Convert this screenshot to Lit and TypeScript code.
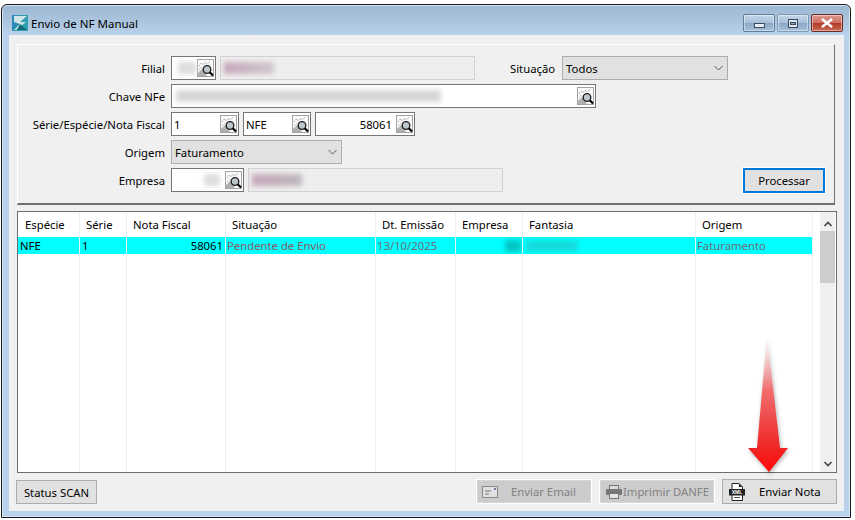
import { LitElement, html, css } from "lit";
import { customElement } from "lit/decorators.js";

const lookup = html`<svg class="lk" viewBox="0 0 17 18" width="17" height="18">
  <rect x=".5" y=".5" width="16" height="17" fill="#fbfbfb" stroke="#a2a2a2"/>
  <path d="M1 17 L1 14 L5 10 L10 17Z" fill="#b0b0b0"/>
  <path d="M2 7 L4 4 L6 6 L8 3 L10 5 L13 2.5" fill="none" stroke="#777" stroke-width=".8" stroke-dasharray="1 1"/>
  <path d="M2 11 L4 8 L6 10" fill="none" stroke="#999" stroke-width=".8" stroke-dasharray="1 1"/>
  <circle cx="10" cy="10.5" r="3.8" fill="#bcc7cc" stroke="#1a1a1a" stroke-width="1.3"/>
  <path d="M12.7 13.2 L16 16.5" stroke="#000" stroke-width="2.1"/>
</svg>`;

const chev = html`<svg class="chev" viewBox="0 0 9 6" width="9" height="6"><path d="M.5 1 L4.5 5 L8.5 1" fill="none" stroke="#555" stroke-width="1"/></svg>`;

const cols = [
  { t: "Espécie", w: 62, c: "NFE", cls: "blk" },
  { t: "Série", w: 47, c: "1", cls: "blk" },
  { t: "Nota Fiscal", w: 99, c: "58061", cls: "blk num" },
  { t: "Situação", w: 150, c: "Pendente de Envio", cls: "red" },
  { t: "Dt. Emissão", w: 80, c: "13/10/2025", cls: "gry" },
  { t: "Empresa", w: 67, c: "", cls: "emp" },
  { t: "Fantasia", w: 173, c: "", cls: "fan" },
  { t: "Origem", w: 117, c: "Faturamento", cls: "gry" },
];

@customElement("app-root")
export class AppRoot extends LitElement {
  static styles = css`
    :host { display: block; width: 855px; height: 520px; box-sizing: border-box; padding: 4px 4px 2px 1px; background: #fff;
      font: 11.3px "Noto Sans", "Open Sans", sans-serif; color: #000; overflow: hidden; position: relative; }
    * { box-sizing: border-box; }
    .win { height: 100%; border: 1px solid #1a1a1a; border-radius: 6px 6px 0 0; display: flex; flex-direction: column;
      background: linear-gradient(180deg, #9db8d3 0, #a9c3dd 14px, #b9d1ea 30px, #b9d1ea 100%); box-shadow: inset 0 0 0 1px #d4e4f3; }
    .title { height: 30px; flex: none; display: flex; align-items: center; padding: 6px 7px 0 10px; gap: 3px; }
    .title .cap { font-size: 11.5px; flex: 1; }
    .logo { flex: none; }
    .ctl { display: flex; gap: 2px; }
    .ctl div { height: 18px; border: 1px solid #5f7c9c; border-radius: 2px; display: flex; align-items: center; justify-content: center;
      background: linear-gradient(180deg, #c4d6e8 0, #a9c1da 48%, #8ba8c7 52%, #a6c0da 100%); box-shadow: inset 0 0 0 1px rgba(255,255,255,.45); }
    .ctl .min { width: 32px; } .ctl .max { width: 32px; border-color: #7d99b6; }
    .ctl .cls { width: 32px; border-color: #6d2a20; background: linear-gradient(180deg, #dd9a8e 0, #ce6f60 48%, #b33a27 52%, #c96a55 100%); }
    .gmin { width: 11px; height: 5px; background: #e8eef5; border: 1px solid #3b4a5c; margin-top: 5px; }
    .gmax { width: 10px; height: 9px; background: #dde6ef; border: 1px solid #3b4a5c; position: relative; }
    .gmax::after { content: ""; position: absolute; left: 1px; top: 2px; width: 6px; height: 3px; background: #8ba8c7; border: 1px solid #3b4a5c; box-sizing: border-box; }
    .client { flex: 1; margin: 0 6px 6px 7px; background: #f0f0f0; padding: 9px 8px 6px; display: flex; flex-direction: column; min-height: 0; }
    .panel { flex: none; height: 161px; margin-right: 1px; border: 1px solid; border-color: #fff #6f6f6f #6f6f6f #fff; border-bottom-width: 2px; padding: 11px 9px 0 0; display: flex; flex-direction: column; gap: 4px; }
    .row { display: flex; height: 24px; align-items: center; gap: 4px; }
    .lb { width: 147px; text-align: right; margin-right: 2px; flex: none; white-space: nowrap; }
    .lb2 { margin-left: 31px; margin-right: 3px; }
    .in { height: 100%; border: 1px solid #767676; background: #fff; display: flex; align-items: center; padding: 0 1px 0 2px; flex: none; }
    .in .v { flex: 1; min-width: 0; } .in.r .v { text-align: right; padding-right: 4px; }
    .lk { flex: none; display: block; }
    .ro { height: 100%; border: 1px solid #d2d2d2; background: #eeeeee; flex: none; display: flex; align-items: center; padding-left: 3px; }
    .sel { height: 100%; border: 1px solid #adadad; background: #e1e1e1; flex: none; display: flex; align-items: center; justify-content: space-between; padding: 0 4px 0 3px; }
    .bl { filter: blur(2.5px); height: 12px; flex: none; }
    .btnP { margin-left: auto; width: 82px; height: 25px; border: 2px solid #0078d7; background: #e1e1e1; display: flex; align-items: center; justify-content: center; box-shadow: 0 0 0 1px #fff; }
    .grid { flex: none; height: 262px; margin-top: 6px; margin-right: -1px; border: 1px solid #6e6e6e; background: #fff; display: flex; }
    .col { flex: none; border-right: 1px solid #efefef; display: flex; flex-direction: column; }
    .hd { height: 25px; padding-left: 6px; display: flex; align-items: center; flex: none; }
    .col:first-child .hd { padding-left: 7px; }
    .cell { height: 17px; flex: none; background: #00ffff; display: flex; align-items: center; padding: 0 1px; white-space: nowrap; overflow: hidden; }
    .cell.num { justify-content: flex-end; padding-right: 2px; }
    .red { color: #8a5a62; padding-left: 1px; }
    .gry { color: #6e6e78; }
    .blk { color: #000; padding-left: 2px; }
    .emp { justify-content: flex-end; }
    .sb { width: 15px; flex: none; margin-left: auto; margin-right: 1px; background: #f0f0f0; display: flex; flex-direction: column; align-items: center; }
    .sb svg { flex: none; }
    .sb .up { margin-top: 6px; height: 12px; }
    .th { width: 100%; height: 52px; background: #cdcdcd; margin-top: 1px; }
    .sb .dn { margin-top: auto; margin-bottom: 4px; }
    .foot { display: flex; margin-top: 6px; gap: 7px; flex: none; height: 25px; margin-right: -1px; margin-left: -1px; }
    .b { height: 25px; border: 1px solid #adadad; background: #e1e1e1; display: flex; align-items: center; flex: none; white-space: nowrap; }
    .b.dis { background: #cccccc; color: #838383; border: 1px solid #fff; outline: 1px solid #d6d6d6; outline-offset: -2px; }
    .scan { width: 81px; justify-content: center; margin-right: auto; height: 24px; margin-top: 1px; }
    .em { width: 116px; } .em svg { margin-left: 5px; } .em span { margin-left: 13px; }
    .im { width: 116px; } .im svg { margin-left: 6px; } .im span { margin-left: 1px; }
    .nt { width: 115px; } .nt svg { margin-left: 6px; } .nt span { margin-left: 14px; }
    .xml { font: bold 5px "Liberation Sans", sans-serif; fill: #fff; }
    .arrow { position: absolute; left: 740px; top: 330px; pointer-events: none; filter: drop-shadow(1px 2px 2px rgba(0,0,0,.3)); }
  `;

  render() {
    return html`
      <div class="win">
        <div class="title">
          <svg class="logo" viewBox="0 0 16 16" width="16" height="16">
            <rect width="16" height="16" fill="#2e9fb0"/>
            <path d="M0 0H7L3 5L8 7L0 16Z" fill="#2c8bb8"/>
            <path d="M2 1H15L8 7L14 7L4 15H2L8 9L2 7Z" fill="#cfe4e6"/>
            <path d="M8 9L15 15H5Z" fill="#0f6a7a"/>
          </svg>
          <span class="cap">Envio de NF Manual</span>
          <div class="ctl">
            <div class="min"><span class="gmin"></span></div>
            <div class="max"><span class="gmax"></span></div>
            <div class="cls">
              <svg viewBox="0 0 14 10" width="14" height="10"><path d="M2 1 L12 9 M12 1 L2 9" stroke="#f4f4f4" stroke-width="2.6"/><path d="M2 1 L12 9 M12 1 L2 9" stroke="#fff" stroke-width="1.4"/></svg>
            </div>
          </div>
        </div>
        <div class="client">
          <div class="panel">
            <div class="row">
              <span class="lb">Filial</span>
              <div class="in" style="width:45px"><span class="v"><div class="bl" style="width:18px;margin-left:4px;background:#ddd"></div></span>${lookup}</div>
              <div class="ro" style="width:255px"><div class="bl" style="width:50px;background:linear-gradient(90deg,#c8a8bc,#cfc8cf)"></div></div>
              <span class="lb2">Situação</span>
              <div class="sel" style="width:166px"><span>Todos</span>${chev}</div>
            </div>
            <div class="row">
              <span class="lb">Chave NFe</span>
              <div class="in" style="width:425px"><span class="v"><div class="bl" style="width:265px;margin-left:2px;background:#d6d6d6"></div></span>${lookup}</div>
            </div>
            <div class="row">
              <span class="lb">Série/Espécie/Nota Fiscal</span>
              <div class="in" style="width:68px"><span class="v">1</span>${lookup}</div>
              <div class="in" style="width:68px"><span class="v">NFE</span>${lookup}</div>
              <div class="in r" style="width:100px"><span class="v">58061</span>${lookup}</div>
            </div>
            <div class="row">
              <span class="lb">Origem</span>
              <div class="sel" style="width:171px"><span>Faturamento</span>${chev}</div>
            </div>
            <div class="row">
              <span class="lb">Empresa</span>
              <div class="in r" style="width:73px"><span class="v"><div class="bl" style="width:16px;margin-left:30px;background:#ddd"></div></span>${lookup}</div>
              <div class="ro" style="width:255px"><div class="bl" style="width:50px;background:linear-gradient(90deg,#c8a8bc,#bdb8bd)"></div></div>
              <div class="btnP">Processar</div>
            </div>
          </div>
          <div class="grid">
            ${cols.map(c => html`
              <div class="col" style="width:${c.w}px">
                <div class="hd">${c.t}</div>
                <div class="cell ${c.cls}">${c.c}
                  ${c.cls === "emp" ? html`<div class="bl" style="width:16px;background:#00c4c4"></div>` : ""}
                  ${c.cls === "fan" ? html`<div class="bl" style="width:52px;background:#14dcdc;margin-left:2px"></div>` : ""}
                </div>
              </div>`)}
            <div class="sb">
              <svg class="up" viewBox="0 0 10 8" width="10" height="8"><path d="M1.5 6 L5 2.5 L8.5 6" fill="none" stroke="#444" stroke-width="1.6"/></svg>
              <div class="th"></div>
              <svg class="dn" viewBox="0 0 10 8" width="10" height="8"><path d="M1.5 2 L5 5.5 L8.5 2" fill="none" stroke="#444" stroke-width="1.6"/></svg>
            </div>
          </div>
          <div class="foot">
            <div class="b scan">Status SCAN</div>
            <div class="b dis em">
              <svg viewBox="0 0 16 12" width="16" height="12"><rect x=".5" y=".5" width="15" height="11" fill="#e0e0e0" stroke="#8a8a8a"/><path d="M3 5H9M3 8H7" stroke="#777"/><rect x="12" y="2" width="2" height="2" fill="#6d7f9c"/></svg>
              <span>Enviar Email</span>
            </div>
            <div class="b dis im">
              <svg viewBox="0 0 16 14" width="16" height="14"><rect x="3.5" y=".5" width="9" height="4" fill="#ddd" stroke="#777"/><rect x="0" y="4" width="16" height="6" rx="1" fill="#777"/><rect x="3.5" y="8.5" width="9" height="5" fill="#e5e5e5" stroke="#777"/></svg>
              <span>Imprimir DANFE</span>
            </div>
            <div class="b nt">
              <svg viewBox="0 0 16 18" width="16" height="18"><path d="M3 .5H10L13.5 4V17.5H3Z" fill="#fff" stroke="#222"/><path d="M10 .5L13.5 4H10Z" fill="#222"/><rect x="0" y="6" width="16" height="6.5" fill="#222"/><text class="xml" x="8" y="11.2" text-anchor="middle">XML</text><path d="M5 14.5H11" stroke="#222" stroke-width=".8"/></svg>
              <span>Enviar Nota</span>
            </div>
          </div>
        </div>
      </div>
      <svg class="arrow" viewBox="0 0 60 150" width="60" height="150">
        <defs><linearGradient id="g" x1="0" y1="0" x2="0" y2="1"><stop offset="0" stop-color="#fff" stop-opacity=".3"/><stop offset=".4" stop-color="#f26d6d"/><stop offset=".8" stop-color="#ee2a2a"/><stop offset="1" stop-color="#ff0606"/></linearGradient></defs>
        <path d="M27 5 L40 118 L48 118 L29 142 L8 118 L17 118 Z" fill="url(#g)"/>
      </svg>
    `;
  }
}
